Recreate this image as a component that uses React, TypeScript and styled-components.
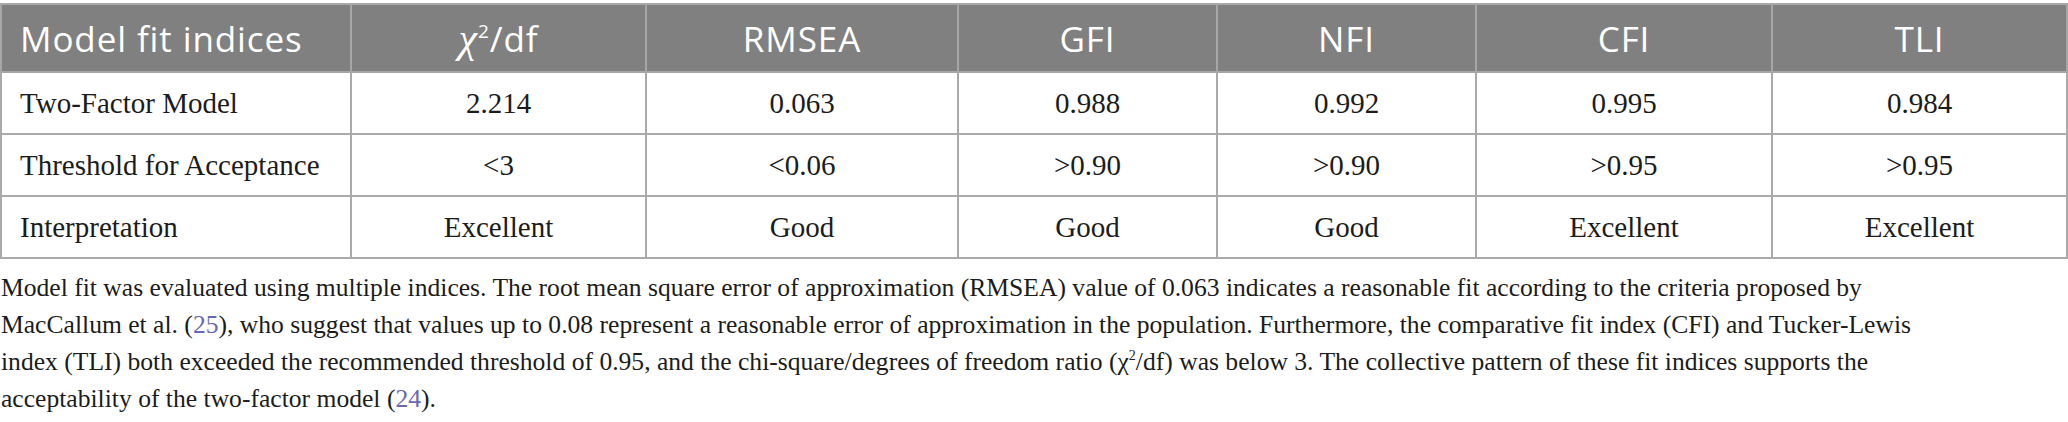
import styled, { createGlobalStyle } from "styled-components";

const GlobalStyle = createGlobalStyle`
  html, body {
    margin: 0;
    padding: 0;
    background: #ffffff;
  }
`;

const columns = [350, 295, 312, 259, 259, 296, 295];

const rows = [
  ["Two-Factor Model", "2.214", "0.063", "0.988", "0.992", "0.995", "0.984"],
  ["Threshold for Acceptance", "<3", "<0.06", ">0.90", ">0.90", ">0.95", ">0.95"],
  ["Interpretation", "Excellent", "Good", "Good", "Good", "Excellent", "Excellent"],
];

const App = () => {
  return (
    <StPage>
      <GlobalStyle />
      <StTable>
        <colgroup>
          {columns.map((w, i) => (
            <col key={i} style={{ width: w }} />
          ))}
        </colgroup>
        <thead>
          <StHeadRow>
            <StHeadCell $left>Model fit indices</StHeadCell>
            <StHeadCell>
              <StChi>χ</StChi>
              <sup>2</sup>/df
            </StHeadCell>
            <StHeadCell>RMSEA</StHeadCell>
            <StHeadCell>GFI</StHeadCell>
            <StHeadCell>NFI</StHeadCell>
            <StHeadCell>CFI</StHeadCell>
            <StHeadCell>TLI</StHeadCell>
          </StHeadRow>
        </thead>
        <tbody>
          {rows.map((row) => (
            <StRow key={row[0]}>
              {row.map((value, i) => (
                <StCell key={i} $left={i === 0}>
                  {value}
                </StCell>
              ))}
            </StRow>
          ))}
        </tbody>
      </StTable>
      <StNote>
        <StLine>
          Model fit was evaluated using multiple indices. The root mean square error of
          approximation (RMSEA) value of 0.063 indicates a reasonable fit according to the
          criteria proposed by
        </StLine>
        <StLine>
          MacCallum et al. (<StRef>25</StRef>), who suggest that values up to 0.08 represent a
          reasonable error of approximation in the population. Furthermore, the comparative fit
          index (CFI) and Tucker-Lewis
        </StLine>
        <StLine>
          index (TLI) both exceeded the recommended threshold of 0.95, and the
          chi-square/degrees of freedom ratio (χ<sup>2</sup>/df) was below 3. The collective
          pattern of these fit indices supports the
        </StLine>
        <StLine>
          acceptability of the two-factor model (<StRef>24</StRef>).
        </StLine>
      </StNote>
    </StPage>
  );
};

export default App;

const StPage = styled.div`
  width: 2068px;
  padding-top: 3px;
`;

const StTable = styled.table`
  width: 2068px;
  table-layout: fixed;
  border-collapse: collapse;
  border: 2px solid #a9a9a9;
`;

const StHeadRow = styled.tr`
  height: 68px;
  background: #7f807f;
`;

const StHeadCell = styled.th<{ $left?: boolean }>`
  padding: 0 0 0 ${(p) => (p.$left ? "18px" : "0")};
  border: 2px solid #a6a6a6;
  border-top: none;
  color: #ffffff;
  font-family: "Open Sans", sans-serif;
  font-size: 35px;
  font-weight: 400;
  letter-spacing: 0.9px;
  text-align: ${(p) => (p.$left ? "left" : "center")};
  vertical-align: middle;

  sup {
    font-size: 19px;
    vertical-align: 14px;
    line-height: 0;
  }
`;

const StChi = styled.i`
  font-family: "Liberation Serif", serif;
  font-size: 42px;
`;

const StRow = styled.tr`
  height: 62px;
`;

const StCell = styled.td<{ $left?: boolean }>`
  padding: 0 0 0 ${(p) => (p.$left ? "18px" : "0")};
  border: 2px solid #aaaaaa;
  color: #1c1c1c;
  font-family: "Liberation Serif", serif;
  font-size: 29px;
  text-align: ${(p) => (p.$left ? "left" : "center")};
  vertical-align: middle;
`;

const StNote = styled.div`
  padding: 10px 0 0 1px;
  color: #1c1c1c;
  font-family: "Liberation Serif", serif;
  font-size: 25.6px;
  line-height: 37px;

  sup {
    font-size: 14px;
    line-height: 0;
  }
`;

const StLine = styled.span`
  display: block;
  white-space: nowrap;
`;

const StRef = styled.span`
  color: #6b67b4;
`;
